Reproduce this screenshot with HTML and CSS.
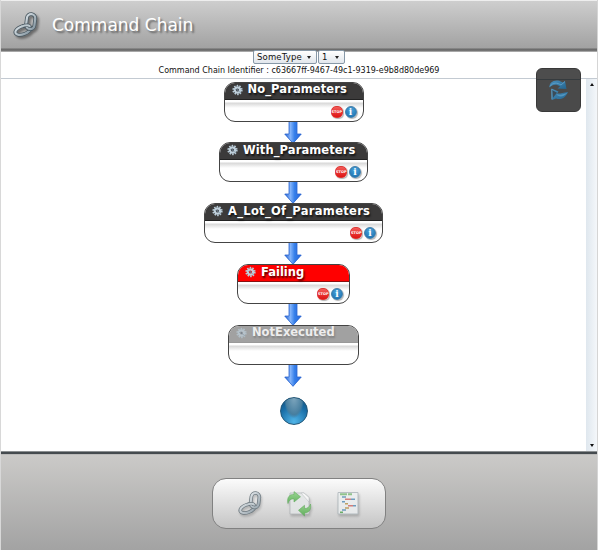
FILE: index.html
```html
<!DOCTYPE html>
<html lang="en">
<head>
<meta charset="utf-8">
<title>Command Chain</title>
<link rel="stylesheet" href="styles.css">
</head>
<body>
<svg class="defs" aria-hidden="true">
  <defs>
    <linearGradient id="metal" x1="0" y1="0" x2="1" y2="1"><stop offset="0" stop-color="#d5dde2"/><stop offset="1" stop-color="#8798a3"/></linearGradient>
    <linearGradient id="arrow" x1="0" y1="0" x2="1" y2="0"><stop offset="0" stop-color="#2561d0"/><stop offset=".35" stop-color="#82b3fa"/><stop offset=".6" stop-color="#347ee9"/><stop offset="1" stop-color="#2868dc"/></linearGradient>
    <linearGradient id="leaf" x1="0" y1="0" x2="0" y2="1"><stop offset="0" stop-color="#7fce74"/><stop offset="1" stop-color="#3ca436"/></linearGradient>
    <linearGradient id="wave" x1="0" y1="0" x2="1" y2="1"><stop offset="0" stop-color="#4a90bd"/><stop offset="1" stop-color="#23648f"/></linearGradient>
  </defs>
  <symbol id="chain" viewBox="0 0 24 24">
    <g fill="none">
      <ellipse cx="9.500" cy="17.500" rx="7.600" ry="3.900" transform="rotate(-20 9.500 17.500)" stroke="#485760" stroke-width="3.600"/>
      <ellipse cx="9.500" cy="17.500" rx="7.600" ry="3.900" transform="rotate(-20 9.500 17.500)" stroke="url(#metal)" stroke-width="2.100"/>
      <rect x="13" y="2" width="8" height="14.500" rx="4" transform="rotate(7 17 9)" stroke="#485760" stroke-width="3.600"/>
      <rect x="13" y="2" width="8" height="14.500" rx="4" transform="rotate(7 17 9)" stroke="url(#metal)" stroke-width="2.100"/>
      <path d="M9 13.700c3-1.200 6-1.300 7.300.1" stroke="#485760" stroke-width="3.200"/>
      <path d="M8.500 13.900c3-1.200 6.400-1.500 7.900 0" stroke="#bdc8ce" stroke-width="1.800"/>
    </g>
  </symbol>
  <symbol id="gear" viewBox="0 0 12 12">
    <circle cx="6" cy="6" r="4.700" fill="none" stroke="#b8cbd7" stroke-width="1.800" stroke-dasharray="1.700 1.250"/>
    <circle cx="6" cy="6" r="2.900" fill="none" stroke="#bfd0dc" stroke-width="2.400"/>
    <circle cx="6" cy="6" r="1" fill="#66788a"/>
    <path d="M6.500 6.500l3 2.500M5 4.500L3.500 6" stroke="#8198a8" stroke-width=".8"/>
  </symbol>
  <symbol id="down" viewBox="0 0 18 22">
    <path d="M5 0h8v12h4.500L9 21.500.5 12H5z" fill="url(#arrow)"/>
    <path d="M5 0v12H.8L9 21.300 17.200 12H13V0" fill="none" stroke="#2c66cf" stroke-width=".8"/>
  </symbol>
</svg>

<div class="window">
  <header class="header">
    <svg class="logo"><use href="#chain"/></svg>
    <h1 class="title">Command Chain</h1>
  </header>

  <div class="toolbar">
    <div class="selects">
      <button class="select type"><span>SomeType</span><i class="caret"></i></button>
      <button class="select number"><span>1</span><i class="caret"></i></button>
    </div>
    <p class="identifier">Command Chain Identifier : c63667ff-9467-49c1-9319-e9b8d80de969</p>
  </div>

  <main class="main">
    <div class="chain">
      <section class="node n1">
        <div class="bar"><svg class="gear"><use href="#gear"/></svg><span class="name">No_Parameters</span></div>
        <div class="actions"><span class="stop">STOP</span><span class="info">i</span></div>
      </section>
      <svg class="down"><use href="#down"/></svg>
      <section class="node n2">
        <div class="bar"><svg class="gear"><use href="#gear"/></svg><span class="name">With_Parameters</span></div>
        <div class="actions"><span class="stop">STOP</span><span class="info">i</span></div>
      </section>
      <svg class="down"><use href="#down"/></svg>
      <section class="node n3">
        <div class="bar"><svg class="gear"><use href="#gear"/></svg><span class="name">A_Lot_Of_Parameters</span></div>
        <div class="actions"><span class="stop">STOP</span><span class="info">i</span></div>
      </section>
      <svg class="down"><use href="#down"/></svg>
      <section class="node n4 failing">
        <div class="bar"><svg class="gear"><use href="#gear"/></svg><span class="name">Failing</span></div>
        <div class="actions"><span class="stop">STOP</span><span class="info">i</span></div>
      </section>
      <svg class="down"><use href="#down"/></svg>
      <section class="node n5 idle">
        <div class="bar"><svg class="gear"><use href="#gear"/></svg><span class="name">NotExecuted</span></div>
      </section>
      <svg class="down"><use href="#down"/></svg>
      <div class="ball"></div>
    </div>
    <div class="scrollbar"><i class="up"></i><i class="dn"></i></div>
  </main>

  <footer class="footer">
    <nav class="dock">
      <svg class="dock-icon" viewBox="0 0 24 24"><use href="#chain"/></svg>
      <svg class="dock-icon" viewBox="0 0 24 24">
        <path d="M3 2h14l5 4.500V23H3z" fill="#e4e7e8" stroke="#a5abae" stroke-width=".8"/>
        <path d="M14 2h3l5 4.500V11z" fill="#fafafa" stroke="#a5abae" stroke-width=".5"/>
        <path d="M1 12.500C-.5 6 3 3 7 3.500V.6l6.500 5.200L7 11V8C4 7.500 2 9 1 12.500z" fill="url(#leaf)" stroke="#3b9836" stroke-width=".6"/>
        <path d="M23.500 13c1 5.500-1.500 8.800-6 9V25L11.500 19.300l6-5v3.200c3 .2 5-1.500 6-4.500z" fill="url(#leaf)" stroke="#3b9836" stroke-width=".6"/>
      </svg>
      <svg class="dock-icon" viewBox="0 0 24 24">
        <path d="M2 1.500h20v21.500H2z" fill="#edf0f1" stroke="#a7b1b6"/>
        <path d="M4 3.300h12" stroke="#73b56d" stroke-width="2" stroke-dasharray="7 1"/>
        <path d="M6 6h4M15 8.200h4M6 10.700h3M17 14.700h3M6 19h4" stroke="#4885b1" stroke-width="1.500"/>
        <path d="M9 8.200h6M12 14.700h5" stroke="#cf5f5a" stroke-width="1.500"/>
        <path d="M9 12.700h3M9 17h4" stroke="#b58c3c" stroke-width="1.500"/>
        <path d="M4 21.300h3" stroke="#49a046" stroke-width="1.600"/>
      </svg>
    </nav>
  </footer>

  <button class="refresh" aria-label="Refresh">
    <svg viewBox="0 0 20 22">
      <path d="M.5 8.500C0 4 4 .8 9 1.500c2 .3 3.500 1.500 5 2L16 2l1.500 8-9-.5 2.500-2C8 5 3.500 5 .5 8.500z" fill="url(#wave)"/>
      <path d="M2.500 9.500l7 3-1.500 2c3 .5 6-1 11-1.500-2 5-6 8.500-12 6.500l-4 1.500z" fill="url(#wave)"/>
      <path d="M3 11l5 2.800-4 5z" fill="#3b4c59"/>
      <path d="M7.500 15c3 1.500 7 .5 11-1.500-3 4-7 5-10 3z" fill="#5195bf"/>
      <path d="M1 7.500C4 3 8 3.500 12 6l4-3.500M2.800 10v10.500" fill="none" stroke="#63a3cb" stroke-width=".8"/>
    </svg>
  </button>
</div>
</body>
</html>
```
FILE: styles.css
```css
* { box-sizing: border-box; }
body { margin: 0; background: #fff; font-family: "DejaVu Sans", sans-serif; color: #111; }
.defs { position: absolute; width: 0; height: 0; }
.window { position: relative; display: flex; flex-direction: column; width: 598px; height: 550px; border-left: 1px solid #d8d8d8; border-right: 1px solid #d5d5d5; overflow: hidden; }

.header { display: flex; align-items: center; flex: none; height: 52px; padding: 0 0 2px 12px; border-top: 1px solid #eee; background: linear-gradient(#cecece, #a2a2a2 47px, #696969 48px, #777 50px, #d8d8d8 51px); }
.logo { width: 25px; height: 25px; margin: -2px 14px 0 0; filter: drop-shadow(2px 2px 1px rgba(0,0,0,.4)); }
.title { margin: -2px 0 0; font-size: 17px; font-weight: 400; line-height: 24px; color: #fff; text-shadow: 2px 2px 2px rgba(0,0,0,.45); white-space: nowrap; }

.toolbar { flex: none; height: 27px; border-bottom: 1px solid #c3cad2; display: flex; flex-direction: column; align-items: center; }
.selects { display: flex; gap: 1px; height: 12px; }
.select { display: flex; align-items: center; justify-content: space-between; height: 14px; margin-top: -2px; padding: 0 5px 0 3px; border: 1px solid #8798a7; border-radius: 2px; background: linear-gradient(#fff, #e2e7ed); font: 8.5px "DejaVu Sans", sans-serif; letter-spacing: .15px; color: #111; }
.type { width: 64px; }
.number { width: 27px; }
.caret { width: 0; height: 0; border: 2.5px solid transparent; border-top: 3.5px solid #222; border-bottom: 0; }
.identifier { margin: 1px 0 0; font-size: 8px; line-height: 11px; white-space: nowrap; }

.main { flex: none; display: flex; height: 372px; }
.chain { display: flex; flex-direction: column; align-items: center; width: 585px; padding-top: 2.6px; }
.node { flex: none; height: 40px; border: 1px solid #444; border-radius: 11px; background: linear-gradient(#fff 19px, #d8d8d8 20px, #fff 25px); overflow: hidden; }
.n1 { width: 140px; }
.n2 { width: 149px; }
.n3 { width: 179px; }
.n4 { width: 113px; }
.n5 { width: 131px; }
.bar { display: flex; align-items: center; height: 17px; padding: 0 0 3px 7px; background: #3b3a3a; border-bottom: 1px solid #222; color: #fff; }
.gear { flex: none; width: 11px; height: 12px; margin: 1px 5px 0 0; }
.name { font-size: 11.5px; font-weight: 700; line-height: 14px; white-space: nowrap; text-shadow: 1px 2px 2px rgba(0,0,0,.7); }
.n1 .name, .n2 .name { letter-spacing: .1px; }
.n3 .name { letter-spacing: .3px; }
.failing .bar { background: #f00; border-color: #811; }
.idle .bar { background: #a1a1a1; border-color: #999; color: #ededed; }
.idle .name { text-shadow: 1px 2px 2px rgba(0,0,0,.2); }
.idle .gear { opacity: .7; }
.actions { display: flex; justify-content: flex-end; gap: 2px; padding: 6px 6px 0 0; }
.stop, .info { width: 12px; height: 12px; border-radius: 50%; color: #fff; text-align: center; box-shadow: 1px 1px 1px rgba(0,0,0,.3); }
.stop { background: linear-gradient(#f25b58, #df1414); border: 1px solid #dc3936; border-radius: 5px; font-size: 3.5px; font-weight: 700; line-height: 10px; }
.info { background: radial-gradient(circle at 50% 30%, #4ba5dc, #176aa9); border: 1px solid #417ca7; font: 700 9px/10px "DejaVu Serif", serif; }
.down { flex: none; width: 18px; height: 22px; margin: 0 1px -1.2px 0; }
.ball { flex: none; width: 28px; height: 28px; margin-top: 11px; border: 1px solid #245777; border-radius: 50%; background: radial-gradient(ellipse at 50% 0, #7ea6bd 0, #477e9f 45%, transparent 55%), radial-gradient(circle at 50% 90%, #50b4e7, #176ba4 60%, #114d79); }
.scrollbar { display: flex; flex-direction: column; justify-content: space-between; align-items: center; width: 11px; padding: 4px 0; background: linear-gradient(90deg, #dfe7ee, #f4f7fa); }
.up, .dn { width: 0; height: 0; border: 2.5px solid transparent; }
.up { border-bottom: 3px solid #111; border-top: 0; }
.dn { border-top: 3px solid #111; border-bottom: 0; }

.footer { display: flex; flex: 1; align-items: flex-start; justify-content: center; padding-top: 27px; background: linear-gradient(#8b8f91 1px, #454b4f 1px, #454b4f 3px, #aaa 3px, #cbcac8 4px, #a3a3a3 98px); }
.dock { display: flex; align-items: center; gap: 25px; width: 174px; height: 51px; padding-left: 25px; border: 1px solid #818181; border-radius: 14px; background: linear-gradient(#fbfbfb, #c4c4c4); }
.dock-icon { width: 24px; height: 24px; margin-top: -2px; opacity: .75; overflow: visible; filter: drop-shadow(1px 2px 1px rgba(0,0,0,.25)); }

.refresh { position: absolute; left: 535px; top: 68px; display: flex; align-items: center; justify-content: center; width: 45px; height: 44px; padding: 0; border: 1px solid #393939; border-radius: 6px; background: linear-gradient(#4d4d4d 10px, #363b3e 10px, #363b3e 11px, #4a4a4a 11px); }
.refresh svg { width: 20px; height: 22px; }
```
